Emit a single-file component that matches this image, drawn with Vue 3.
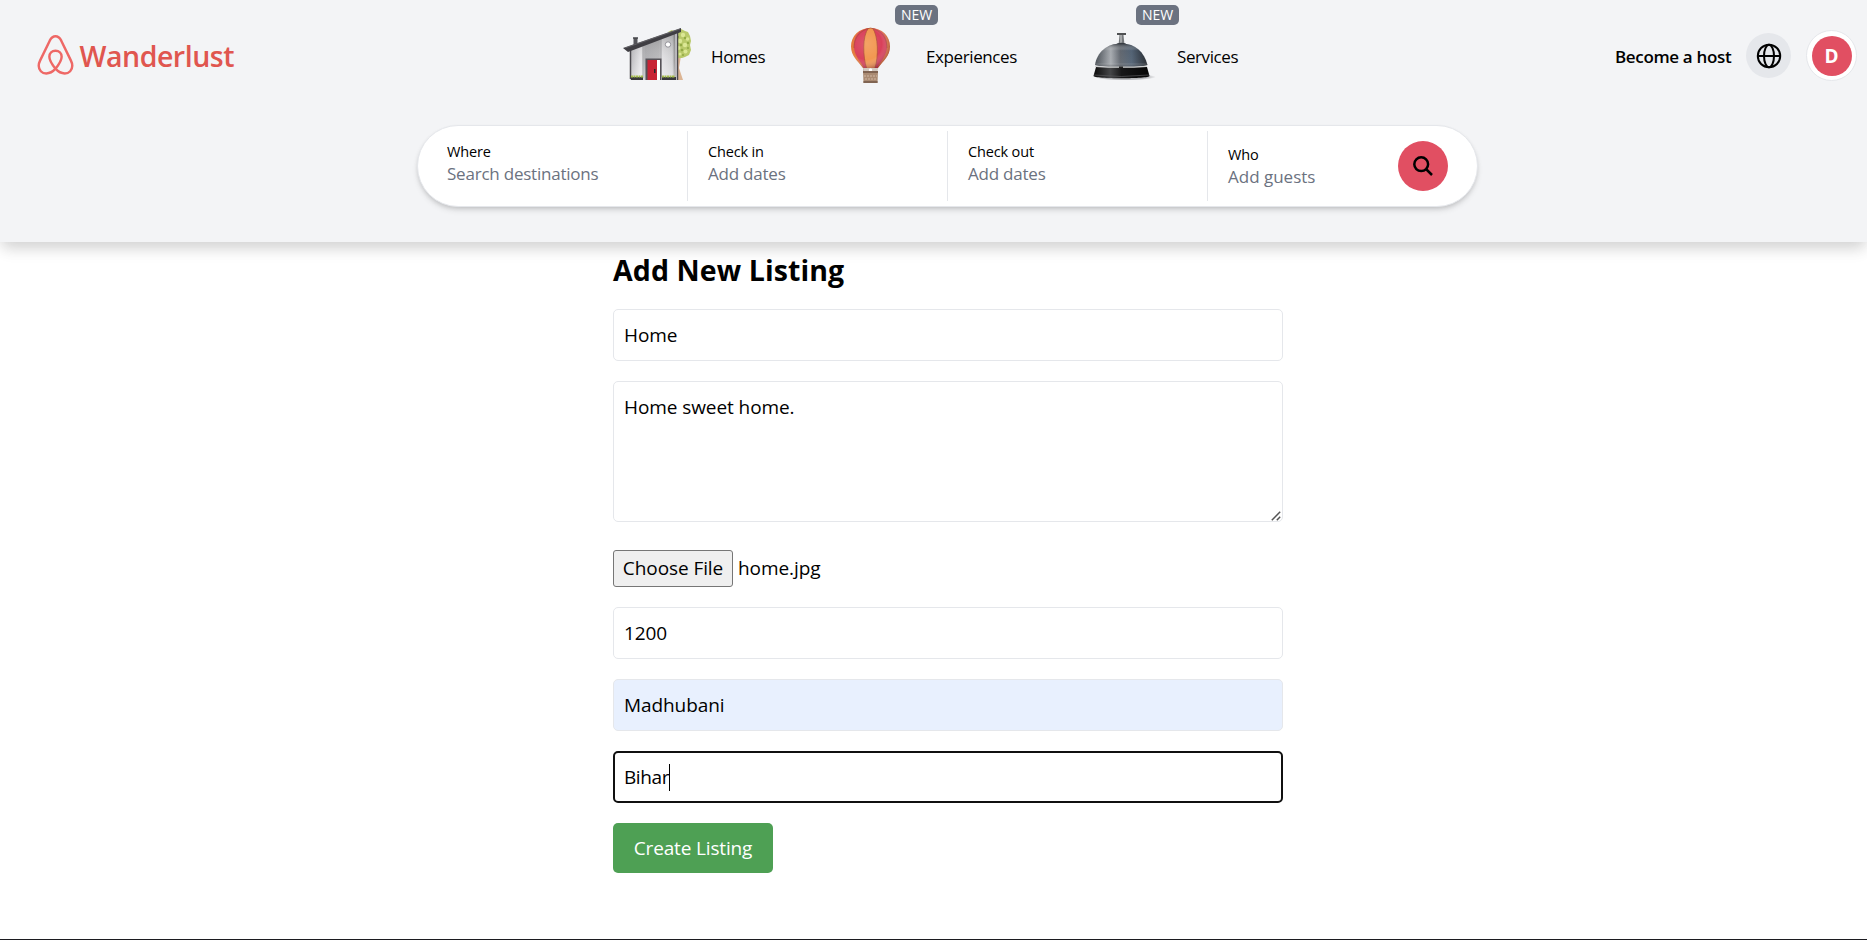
<script setup>
import { ref } from 'vue'

const searchFields = [
  { label: 'Where', hint: 'Search destinations', name: 'where' },
  { label: 'Check in', hint: 'Add dates', name: 'checkin' },
  { label: 'Check out', hint: 'Add dates', name: 'checkout' },
]
const title = ref('Home')
const description = ref('Home sweet home.')
const price = ref('1200')
const city = ref('Madhubani')
const state = ref('Bihar')
</script>

<template>
  <div class="page">
    <header class="header">
      <div class="topbar">
        <a class="brand">
          <svg class="brand-mark" viewBox="0 0 37 41" fill="none" stroke="#ee6866" stroke-width="2.5" stroke-linejoin="round">
            <path d="M18.500 34.500C14.500 29.500 12.200 25.500 12.200 22.200C12.200 18.600 14.900 16.100 18.500 16.100C22.100 16.100 24.800 18.600 24.800 22.200C24.800 25.500 22.500 29.500 18.500 34.500C15.400 38 12 39.400 9 39.400C4.500 39.400 1.300 36 1.300 31.500C1.300 29.500 1.800 28 2.800 26L12.600 5.800C14.200 2.700 15.700 1.300 18.500 1.300C21.300 1.300 22.800 2.700 24.400 5.800L34.200 26C35.200 28 35.700 29.500 35.700 31.500C35.700 36 32.500 39.400 28 39.400C25 39.400 21.600 38 18.500 34.500Z" />
          </svg>
          <span class="brand-name">Wanderlust</span>
        </a>

        <a class="nav homes">
          <svg class="art" width="88" height="60" viewBox="0 0 88 60">
            <defs>
              <linearGradient id="wall" x1="0" x2="1"><stop offset="0" stop-color="#aaa9ad" /><stop offset=".25" stop-color="#e4e3e6" /><stop offset=".33" stop-color="#9d9da1" /><stop offset=".65" stop-color="#aaaaad" /><stop offset=".72" stop-color="#dddcdf" /><stop offset=".94" stop-color="#c9c9cc" /><stop offset="1" stop-color="#777" /></linearGradient>
              <linearGradient id="fade" x1="0" y1="0" x2="0" y2="1"><stop offset="0" stop-color="#777" stop-opacity=".45" /><stop offset=".6" stop-color="#fff" stop-opacity=".2" /><stop offset="1" stop-color="#fff" stop-opacity=".5" /></linearGradient>
            </defs>
            <path d="M53 53V31l5-2-2 12 4 12z" fill="#dcb594" />
            <path d="M45 5l4-2 3 2 6-3 4 2 3 1 2 4 1 5-1 4 1 5-2 5-4 2-3 1-4 0-4-2V6z" fill="#b9c96a" />
            <g fill="#dbe795"><circle cx="60" cy="8" r="2.200" /><circle cx="64.500" cy="12" r="1.800" /><circle cx="57" cy="14" r="2.200" /><circle cx="62" cy="18" r="2.200" /><circle cx="55.500" cy="21" r="2" /><circle cx="62.500" cy="24.500" r="2" /><circle cx="57" cy="27" r="1.500" /></g>
            <g fill="#91a944"><circle cx="62" cy="11" r="1.200" /><circle cx="58" cy="18" r="1.200" /><circle cx="65" cy="16" r="1.200" /><circle cx="59" cy="23" r="1.300" /><circle cx="65" cy="21" r="1" /><circle cx="55" cy="10" r="1.200" /><circle cx="60" cy="28" r="1" /></g>
            <path d="M7 22L52 5v48H7z" fill="url(#wall)" />
            <path d="M7 22L52 5v48H7z" fill="url(#fade)" />
            <path d="M54.500 5v48M7.500 23v29" stroke="#4b494e" stroke-width="1.500" />
            <path d="M52 5h2v48h-2z" fill="#b9b8bc" />
            <path d="M20 18v33M38 11v39" stroke="#8e8e91" stroke-width=".6" />
            <path d="M10.500 19v-8h4v6z" fill="#55555a" /><path d="M10 11h5" stroke="#44464a" stroke-width="1.500" />
            <path d="M0 21L58 1v4L5 25z" fill="#3f3e43" />
            <path d="M2 21L57 2" stroke="#77767b" stroke-width=".6" />
            <rect x="22.500" y="31.500" width="16" height="21.500" fill="#555156" />
            <rect x="25" y="33" width="12" height="20" fill="#fff" /><rect x="24.500" y="33" width="9.500" height="20" fill="#c82334" />
            <rect x="31" y="42" width="1.500" height="4" fill="#282329" />
            <circle cx="45" cy="17.500" r="2.700" fill="#fff" stroke="#929198" />
            <path d="M8 50h12v3H8zM39 50h14v3H39z" fill="#39383c" />
            <path d="M8 49.500h12M39 49.500h13" stroke="#a5bd4c" stroke-width="2" stroke-dasharray="2 .5" />
          </svg>
          <span>Homes</span>
        </a>

        <a class="nav experiences">
          <svg class="art" width="76" height="60" viewBox="0 0 76 60">
            <defs><radialGradient id="balloon" cx=".4" cy=".4" r=".65"><stop offset="0" stop-color="#fff" stop-opacity=".12" /><stop offset=".6" stop-color="#fff" stop-opacity="0" /><stop offset="1" stop-color="#5b1024" stop-opacity=".48" /></radialGradient></defs>
            <path d="M13.500 39L14 46M27 39L26.500 46" stroke="#ae9585" />
            <path d="M20.500 1C9 1 1 9 1 19.500C1 29 8 34 13 41C16 43 25 43 28 41C33 34 40 29 40 19.500C40 9 32 1 20.500 1Z" fill="#e47a3c" />
            <path d="M20.500 1C8 2 3 10 4 21C5 30 11 35 14 41h13C30 35 36 30 37 21C38 10 33 2 20.500 1Z" fill="#d9405a" />
            <path d="M18.500 1C12 9 13 30 16.500 41h8.500C28.500 30 28.500 9 22.500 1Z" fill="#f29750" />
            <path d="M18.500 1C12 9 13 30 16.500 41M22.500 1C28.500 9 28.500 30 25 41M20.500 1C7 4 4 14 4 21M20.500 1C34 4 37 14 37 21" fill="none" stroke="#a64b35" stroke-width=".7" />
            <path d="M20.500 1C9 1 1 9 1 19.500C1 29 8 34 13 41h15C33 34 40 29 40 19.500C40 9 32 1 20.500 1Z" fill="url(#balloon)" />
            <path d="M13 41h15l-1 4H14z" fill="#d3c8bf" /><circle cx="20.500" cy="43" r="1.700" fill="#fff" />
            <path d="M13 44h15l-.5 12h-14z" fill="#aa8b73" /><path d="M13 45h15M13.500 55h14" stroke="#806452" stroke-width="2" />
            <path d="M14 49h13M15 52h12" stroke="#d0b7a4" stroke-dasharray="2 1" />
          </svg>
          <span>Experiences</span><b class="badge">NEW</b>
        </a>

        <a class="nav services">
          <svg class="art" width="84" height="60" viewBox="0 0 84 60">
            <defs>
              <linearGradient id="dome"><stop offset="0" stop-color="#454b52" /><stop offset=".3" stop-color="#a7abb0" /><stop offset=".48" stop-color="#626870" /><stop offset=".7" stop-color="#526274" /><stop offset="1" stop-color="#24282e" /></linearGradient>
              <linearGradient id="base"><stop offset="0" stop-color="#090909" /><stop offset=".3" stop-color="#454648" /><stop offset=".5" stop-color="#171718" /><stop offset="1" stop-color="#050505" /></linearGradient>
              <linearGradient id="shade" x1="0" y1="0" x2="0" y2="1"><stop offset="0" stop-color="#15191e" stop-opacity=".65" /><stop offset=".3" stop-color="#fff" stop-opacity="0" /><stop offset=".8" stop-color="#fff" stop-opacity=".04" /><stop offset="1" stop-color="#1c2229" stop-opacity=".55" /></linearGradient>
              <radialGradient id="ground"><stop offset=".7" stop-color="#8d8e92" stop-opacity=".6" /><stop offset="1" stop-color="#8d8e92" stop-opacity="0" /></radialGradient>
            </defs>
            <ellipse cx="32" cy="50" rx="31" ry="3.500" fill="url(#ground)" />
            <path d="M26.500 8h4l1 10h-6z" fill="#777a7d" /><path d="M24 6h9v2h-9z" fill="#4f5153" /><path d="M28 8v9" stroke="#d5d6d7" />
            <path d="M23 18c1-3 10-3 11 0z" fill="#303439" />
            <path d="M2 38C4 25 14 16.500 28 16.500C43 16.500 51 25 54.500 38C48 41 9 41 2 38Z" fill="url(#dome)" />
            <path d="M2 38C4 25 14 16.500 28 16.500C43 16.500 51 25 54.500 38C48 41 9 41 2 38Z" fill="url(#shade)" />
            <path d="M3 40h51l2.500 9c0 3-56 3-56 0z" fill="url(#base)" />
            <path d="M2 39.300Q28 41 54 39.300" fill="none" stroke="#d2d3d4" stroke-width="1.200" /><path d="M26 39.500h4V41h-4z" fill="#222" />
            <path d="M1 48Q28 51 56 48" fill="none" stroke="#57585a" stroke-width=".7" />
          </svg>
          <span>Services</span><b class="badge">NEW</b>
        </a>

        <div class="account">
          <a class="host">Become a host</a>
          <button class="globe" aria-label="Language">
            <svg width="26" height="26" viewBox="0 0 26 26" fill="none" stroke="#000" stroke-width="2"><circle cx="13" cy="13" r="11.200" /><ellipse cx="13" cy="13" rx="5" ry="11.200" /><path d="M2 13h22" /></svg>
          </button>
          <div class="ring"><div class="avatar">D</div></div>
        </div>
      </div>

      <div class="search">
        <div v-for="f in searchFields" :key="f.name" class="field" :class="f.name">
          <span class="label">{{ f.label }}</span><span class="hint">{{ f.hint }}</span>
        </div>
        <div class="field who">
          <div class="who-text"><span class="label">Who</span><span class="hint">Add guests</span></div>
          <button class="go" aria-label="Search">
            <svg width="20" height="20" viewBox="0 0 20 20" fill="none" stroke="#000" stroke-width="2.500"><circle cx="8.200" cy="8.200" r="6.900" /><path d="M13 13l6 6" /></svg>
          </button>
        </div>
      </div>
    </header>

    <main class="form">
      <h1>Add New Listing</h1>
      <input v-model="title" class="box" />
      <div class="area-wrap">
        <textarea v-model="description" class="box area" spellcheck="false"></textarea>
        <svg class="grip" width="10" height="10" viewBox="0 0 10 10" fill="none" stroke="#555" stroke-width="1.500"><path d="M.8 9.200L9.200.8M5.800 9.200L9.200 5.800" /></svg>
      </div>
      <div class="file"><button class="choose">Choose File</button><span>home.jpg</span></div>
      <input v-model="price" class="box" />
      <input v-model="city" class="box filled" />
      <div class="box focused"><span>{{ state }}</span><i class="caret"></i></div>
      <button class="create">Create Listing</button>
    </main>
    <footer class="edge"></footer>
  </div>
</template>

<style>
body { background: #fff; overflow: hidden; }
</style>

<style scoped>
.page, .page * { box-sizing: border-box; }
.page { display: flex; flex-direction: column; height: 940px; font-family: "Open Sans", "Noto Sans", sans-serif; color: #000; }
button, input, textarea { font: inherit; color: inherit; letter-spacing: inherit; border: 0; padding: 0; margin: 0; }
.header { flex: none; height: 242px; background: #f3f4f6; box-shadow: 0 10px 15px -3px rgba(0,0,0,.1), 0 4px 15px rgba(0,0,0,.1); }
.topbar { display: grid; grid-template-columns: 623px 227px 243px 522px 252px; height: 125px; }
.brand { display: flex; align-items: flex-start; padding: 35px 0 0 36.500px; }
.brand-mark { width: 37px; height: 40px; }
.brand-name { margin-left: 6px; font-size: 28.500px; line-height: 40px; font-weight: 600; color: #e0564f; letter-spacing: -.48px; margin-top: 1px; }
.nav { position: relative; display: flex; align-items: flex-start; padding-top: 27px; font-size: 17px; line-height: 30px; letter-spacing: -.4px; }
.nav span { margin-top: 15px; }
.art { flex: none; }
.badge { position: absolute; top: 5px; left: 45px; width: 43px; height: 20px; border-radius: 5px; background: #6b7280; color: #fff; font-size: 14px; font-weight: 500; line-height: 20px; text-align: center; letter-spacing: 0; }
.services .badge { left: 43px; }
.account { display: flex; align-items: center; height: 111px; font-size: 17px; font-weight: 600; }
.host { width: 131px; line-height: 30px; margin-top: 3px; white-space: nowrap; letter-spacing: -.34px; }
.globe { width: 45px; height: 45px; border-radius: 50%; background: #e5e7eb; display: grid; place-items: center; }
.ring { width: 51px; height: 51px; margin-left: 15px; border-radius: 50%; border: 1px solid #e5e7eb; background: #fff; display: grid; place-items: center; }
.avatar { width: 40px; height: 40px; border-radius: 50%; background: #e14f62; color: #fff; font-size: 19px; font-weight: 700; line-height: 41px; text-align: center; }
.search { display: flex; align-items: center; width: 1061px; height: 82px; margin-left: 417px; padding: 0 29px; border: 1px solid #e5e7eb; border-radius: 41px; background: #fff; box-shadow: 0 4px 6px -1px rgba(0,0,0,.12), 0 2px 4px -1px rgba(0,0,0,.12); }
.field { height: 70px; width: 260px; padding: 10px 0 0 20px; border-right: 1px solid #e5e7eb; display: flex; flex-direction: column; }
.where { width: 241px; padding-left: 0; }
.label { font-size: 14.500px; line-height: 21px; letter-spacing: -.15px; }
.hint { font-size: 17px; line-height: 24px; letter-spacing: -.22px; color: #6b7280; }
.who-text .hint { letter-spacing: 0; }
.who { flex: 1; flex-direction: row; justify-content: space-between; align-items: center; padding: 0 0 0 20px; border: 0; }
.who-text { display: flex; flex-direction: column; padding-top: 1px; }
.go { width: 50px; height: 50px; border-radius: 50%; background: #e14f62; display: grid; place-items: center; }
.form { display: flex; flex-direction: column; width: 670px; margin-left: 613px; font-size: 19px; letter-spacing: -.08px; }
h1 { margin: 8px 0 19px; font-size: 28.500px; line-height: 40px; font-weight: 700; letter-spacing: .1px; }
.box { flex: none; display: block; width: 670px; height: 52px; padding: 10px; border: 1px solid #e5e7eb; border-radius: 5px; background: #fff; line-height: 30px; margin-bottom: 20px; outline: 0; }
.area-wrap { position: relative; margin-bottom: 28px; }
.area { height: 141px; resize: none; margin-bottom: 0; }
.grip { position: absolute; right: 2px; bottom: 1px; }
.file { display: flex; align-items: center; height: 37px; margin-bottom: 20px; }
.file span { margin-top: -1px; }
.choose { width: 120px; height: 37px; border: 1px solid #767676; border-radius: 3px; background: #efefef; margin-right: 5px; line-height: 33px; }
.filled { background: #e8f0fe; }
.focused { display: flex; align-items: center; border: 2px solid #101010; padding: 0 9px; letter-spacing: -.4px; }
.caret { width: 1px; height: 27px; background: #000; }
.create { width: 160px; height: 50px; border-radius: 5px; background: #4ea054; color: #fff; font-weight: 500; letter-spacing: -.15px; }
.edge { height: 1px; margin-top: auto; background: #1c1b20; }
</style>
